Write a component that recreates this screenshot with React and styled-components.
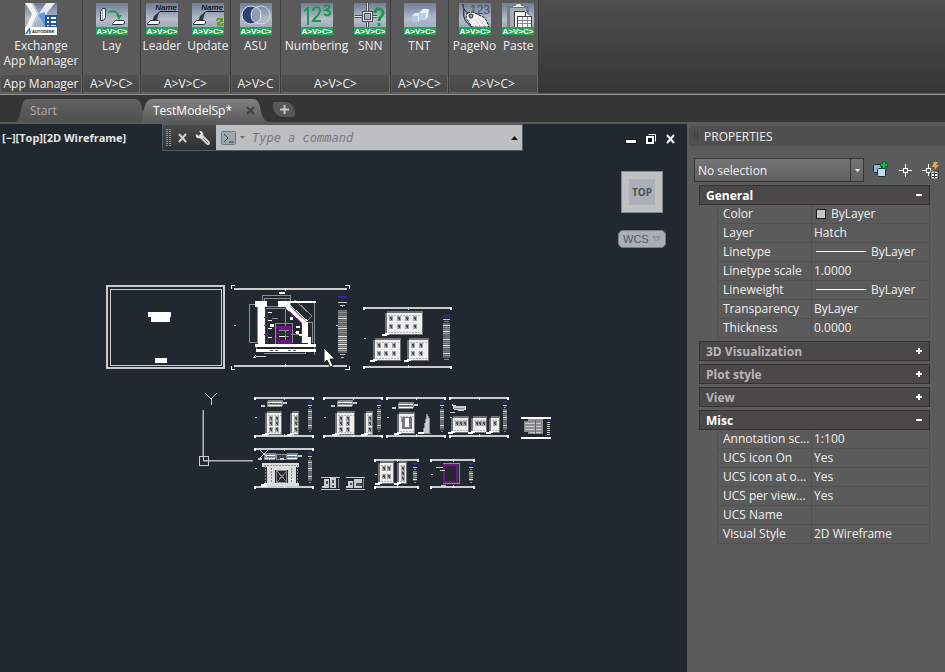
import React from "react";
import styled, { createGlobalStyle } from "styled-components";

const Global = createGlobalStyle`
  * { box-sizing: border-box; }
  body { margin: 0; background: #5b5b5b; color: #f0f0f0; font: 12px/15px "Open Sans", "Noto Sans", sans-serif; }
  button, input, select { font: inherit; color: inherit; margin: 0; }
  button { padding: 0; border: 0; background: none; cursor: default; }
  svg { display: block; }
`;

const Page = styled.div`
  min-height: 100vh;
  display: flex;
  flex-direction: column;
`;

/* ---------- ribbon ---------- */

const Ribbon = styled.header`
  display: flex;
  height: 93px;
  overflow: hidden;
  background: linear-gradient(#4e4e4e, #363636);
`;

const Panel = styled.section`
  display: flex;
  flex-direction: column;
  flex: none;
  width: ${(p) => p.$width}px;
  background: #5a5a5a;
  border-right: 1px solid #3c3c3c;
`;

const PanelTools = styled.div`
  flex: 1;
  display: flex;
  justify-content: center;
  align-items: flex-start;
  gap: 6px;
  padding-top: 3px;
`;

const Tool = styled.button`
  display: flex;
  flex-direction: column;
  align-items: center;
  gap: 3px;
  min-width: 32px;
`;

const PanelTitle = styled.div`
  height: 18px;
  margin-left: 1px;
  text-align: center;
  line-height: 18px;
  white-space: nowrap;
  background: linear-gradient(#505050, #484848);
  border-right: 1px solid #686868;
  border-bottom: 1px solid #686868;
`;

function IconBase({ children, band = "A>V>C>" }) {
  return (
    <svg width="32" height="32" viewBox="0 0 32 32" aria-hidden="true">
      <defs>
        <linearGradient id="tile" x1="0" y1="0" x2="0" y2="1">
          <stop offset="0" stopColor="#6e7c96" />
          <stop offset="0.5" stopColor="#b6bdc9" />
          <stop offset="1" stopColor="#8995a8" />
        </linearGradient>
      </defs>
      <rect width="32" height="32" fill="url(#tile)" />
      {children}
      {band && (
        <>
          <rect y="24" width="32" height="8" fill="#1ea654" />
          <text x="16" y="31" textAnchor="middle" fontSize="8" fontWeight="700" fontFamily="Liberation Sans, sans-serif" fill="#fff">{band}</text>
        </>
      )}
    </svg>
  );
}

const ExchangeIcon = () => (
  <IconBase band="">
    <path d="M0 0h8l6 11-6 13H1l6-13z" fill="#f4f6fa" />
    <path d="M8 0l6 11-6 13-2 0 6-13-6-11z" fill="#c3c9d4" />
    <path d="M21 0h9l-9 11 3 6-3 7-7-13z" fill="#e6ebf3" />
    <path d="M13 11l7-2v15z" fill="#5b9ade" />
    <rect x="20" y="12" width="12" height="12" fill="#2b5590" />
    <path d="M22 14h2v2h-2zM26 14h5v2h-5zM22 18h2v2h-2zM26 18h5v2h-5zM22 22h2v1h-2zM26 22h5v1h-5z" fill="#fff" />
    <rect y="24" width="32" height="8" fill="#fff" />
    <path d="M0 31l4-6h1l1 6H4v-3l-2 3z" fill="#1684c2" />
    <path d="M4 28l2 3H4z" fill="#3cae3c" />
    <text x="7" y="30" fontSize="4" fontWeight="700" fontFamily="Liberation Sans, sans-serif" fill="#111">AUTODESK</text>
  </IconBase>
);

const Slab = ({ x, y }) => (
  <path transform={`translate(${x} ${y})`} d="M0.500 3.500l3-3h8l1 1v2l-2 1h-10z" fill="#fff" stroke="#2a2d33" />
);

const LayIcon = () => (
  <IconBase>
    <path d="M4.500 8.500l2-3h3v9l-2 3h-3z" fill="#f4f6fa" stroke="#30343c" />
    <path d="M6.500 7v10" stroke="#8f9db5" />
    <path d="M12 9c6-2 10 0 11 5" fill="none" stroke="#19a34e" strokeWidth="2" />
    <path d="M20 12h6l-3 5z" fill="#19a34e" />
    <Slab x={16} y={17} />
  </IconBase>
);

const LeaderIcon = ({ update }) => (
  <IconBase>
    <text x="31" y="7" textAnchor="end" fontSize="8" fontStyle="italic" fontWeight="700" fontFamily="Liberation Sans, sans-serif" fill="#15181d">Name</text>
    <path d="M32 8.500H14L9 14" fill="none" stroke="#15181d" />
    <path d="M13 9l-5 4-2 6 5-2 1-4z" fill="#33373e" />
    <Slab x={1} y={17} />
    {update && (
      <>
        <path d="M25 18c0-3 3-3 5-1M31 20c0 3-3 3-5 1" fill="none" stroke="#5c9a20" strokeWidth="2" />
        <path d="M31 14v5h-4zM25 24v-5h4z" fill="#5c9a20" />
      </>
    )}
  </IconBase>
);

const AsuIcon = () => (
  <IconBase>
    <circle cx="21" cy="12" r="9" fill="none" stroke="#d5dbe5" strokeWidth="1" />
    <circle cx="11" cy="12" r="9" fill="#2c4272" stroke="#dfe4ec" />
    <path d="M16 4a9 9 0 0 1 0 16a9 9 0 0 1 0-16z" fill="#8f9cb4" stroke="#dfe4ec" />
  </IconBase>
);

const NumberingIcon = () => (
  <IconBase>
    <path d="M3 8l4-3v17M12 8c0-5 7-5 7-1 0 5-5 7-7 11h8M23 4c2-3 6-2 5 1l-3 2c4 0 5 4 3 5-2 1-4 0-5-1" fill="none" stroke="#169a4a" strokeWidth="2" />
  </IconBase>
);

const SnnIcon = () => (
  <IconBase>
    <path d="M13.500 0v10M13.500 17v7M1 13.500h9M18 13.500h5" stroke="#4a4e56" strokeWidth="3" />
    <path d="M13.500 0v10M13.500 17v7M1 13.500h9M18 13.500h5" stroke="#e5e7ea" />
    <rect x="9.500" y="9.500" width="8" height="8" fill="#a8afbb" stroke="#4a4e56" strokeWidth="3" />
    <rect x="9.500" y="9.500" width="8" height="8" fill="none" stroke="#e5e7ea" />
    <path d="M21 10c0-6 8-5 8 0 0 4-4 3-4 8M25 20v3" fill="none" stroke="#169a4a" strokeWidth="3" />
  </IconBase>
);

const TntIcon = () => (
  <IconBase>
    <path d="M0 20C14 20 24 13 32 8v16H0z" fill="#a9b5c8" opacity="0.6" />
    <path d="M8 13l3-3h5v7l-2 2H8z" fill="#dcebfa" />
    <path d="M8 13h6v6H8z" fill="#a9caec" />
    <path d="M15 10l4-4h6l-1 8-3 3h-6z" fill="#e6f1fc" />
    <path d="M15 10h7l-1 7h-6z" fill="#b3d1f0" />
  </IconBase>
);

const PageNoIcon = () => (
  <IconBase>
    <text x="31" y="11" textAnchor="end" fontSize="12" fontFamily="Liberation Sans, sans-serif" fill="#4a505b">123</text>
    <path d="M4 1c0 5 2 8 7 10M5 6c-1 9 0 12 8 18" fill="none" stroke="#15181d" />
    <path d="M8 10l6-1 12 6 4 8-1 1H13l-6-9z" fill="#f4f4f2" stroke="#15181d" strokeDasharray="3 1" />
    <circle cx="12" cy="13" r="2" fill="#9da5b3" stroke="#222" />
    <path d="M16 16l6 8M19 15l7 8" stroke="#c8c8c6" />
  </IconBase>
);

const PasteIcon = () => (
  <IconBase>
    <rect x="5" y="3" width="22" height="21" rx="1" fill="#777c85" />
    <rect x="8" y="5" width="16" height="19" fill="#a6abb4" />
    <path d="M10.500 4.500v-2h3l1-2h4l1 2h3v2z" fill="#f1f1f1" stroke="#6b6f76" />
    <path d="M12.500 8.500h10l5 5v11h-15z" fill="#f5f5f5" stroke="#34373c" />
    <path d="M23.500 9v5h5" fill="#fff" stroke="#34373c" />
    <rect x="15.500" y="13.500" width="14" height="11" fill="#fff" stroke="#3a3d42" />
    <path d="M16 17.500h13M16 20.500h13M20.500 14v10M25.500 14v10" stroke="#85888e" />
  </IconBase>
);

const PANELS = [
  { title: "App Manager", width: 83, tools: [["Exchange\nApp Manager", <ExchangeIcon />]] },
  { title: "A>V>C>", width: 58, tools: [["Lay", <LayIcon />]] },
  { title: "A>V>C>", width: 90, tools: [["Leader", <LeaderIcon />], ["Update", <LeaderIcon update />]] },
  { title: "A>V>C", width: 50, tools: [["ASU", <AsuIcon />]] },
  { title: "A>V>C>", width: 110, tools: [["Numbering", <NumberingIcon />], ["SNN", <SnnIcon />]] },
  { title: "A>V>C>", width: 58, tools: [["TNT", <TntIcon />]] },
  { title: "A>V>C>", width: 90, tools: [["PageNo", <PageNoIcon />], ["Paste", <PasteIcon />]] },
];

const ToolLabel = styled.span`
  white-space: pre;
`;

/* ---------- file tabs ---------- */

const TabBar = styled.nav`
  display: flex;
  align-items: flex-end;
  height: 28px;
  padding-left: 15px;
  background: #353535;
  border-top: 1px solid #909090;
  margin-top: 1px;
`;

const FileTab = styled.button`
  display: flex;
  align-items: center;
  justify-content: space-between;
  width: ${(p) => p.$width}px;
  height: 24px;
  padding: 0 14px 0 ${(p) => p.$pad}px;
  color: ${(p) => (p.$active ? "#ffffff" : "#b5adb3")};
  background: ${(p) => (p.$active ? "linear-gradient(#838383, #5b5b5b)" : "linear-gradient(#626262, #505050)")};
  clip-path: ${(p) => p.$shape};
`;

const NewTab = styled.button`
  display: grid;
  place-items: center;
  width: 22px;
  height: 15px;
  margin: 0 0 5px 4px;
  background: #585858;
  border-radius: 2px 10px 2px 10px;
`;

/* ---------- work area ---------- */

const Work = styled.div`
  flex: 1;
  display: flex;
  background: #5b5b5b;
`;

const Viewport = styled.main`
  position: relative;
  flex: 1;
  margin-top: 2px;
  overflow: hidden;
  background: #212830;
`;

const Drawing = styled.svg`
  position: absolute;
  left: 0;
  top: 0;
`;

const ViewportLabel = styled.div`
  position: absolute;
  left: 2px;
  top: 6px;
  font-weight: 700;
  font-size: 11px;
  color: #e6e6e6;
`;

const CommandBar = styled.form`
  position: absolute;
  left: 162px;
  top: 0;
  width: 361px;
  height: 27px;
  display: flex;
  border: 1px solid #5a5d60;
  background: #bdbec0;
`;

const CommandTools = styled.div`
  display: flex;
  align-items: center;
  width: 53px;
  gap: 7px;
  padding-left: 3px;
  background: linear-gradient(#4a4a4a, #303030);
`;

const CommandInput = styled.input`
  flex: 1;
  min-width: 0;
  padding: 0;
  border: 0;
  outline: 0;
  background: none;
  font: italic 12px/16px "DejaVu Sans Mono", monospace;
  &::placeholder { color: #77797c; opacity: 1; }
`;

const CommandButton = styled.button`
  display: flex;
  align-items: center;
  gap: 4px;
  padding: 0 4px 0 5px;
  & + input { padding-left: 3px; }
`;

const WindowButtons = styled.div`
  position: absolute;
  right: 10px;
  top: 9px;
  display: flex;
  align-items: center;
  gap: 8px;
`;

const ViewCube = styled.button`
  position: absolute;
  right: 24px;
  top: 47px;
  width: 42px;
  height: 42px;
  display: grid;
  place-items: center;
  background: #bfc0c2;
  border: 1px solid #85878a;
`;

const CubeFace = styled.span`
  width: 26px;
  height: 26px;
  text-align: center;
  background: #abafb7;
  color: #4c5158;
  font: 700 10px/26px "Open Sans", sans-serif;
`;

const WcsButton = styled.button`
  position: absolute;
  right: 21px;
  top: 106px;
  width: 48px;
  height: 18px;
  display: flex;
  align-items: center;
  justify-content: space-between;
  padding: 0 4px;
  border-radius: 5px;
  border: 1px solid #767c86;
  background: #a9aeb8;
  color: #555a63;
  font: 11px/16px "Liberation Sans", sans-serif;
`;

/* ---------- properties palette ---------- */

const Palette = styled.aside`
  width: 258px;
  padding-left: 2px;
`;

const PaletteTitle = styled.h2`
  display: flex;
  align-items: center;
  gap: 6px;
  height: 20px;
  margin: 4px 0 0;
  padding-left: 5px;
  font-size: 12px;
  font-weight: 400;
  background: #4f4f4f;
  border-radius: 4px 0 0 0;
`;

const SelectionRow = styled.div`
  display: flex;
  align-items: center;
  gap: 7px;
  margin: 12px 6px 3px 5px;
`;

const SelectBox = styled.div`
  position: relative;
  flex: 1;
  height: 24px;
  border: 1px solid #363636;
  background: linear-gradient(#737575, #606161);
`;

const Select = styled.select`
  appearance: none;
  width: 100%;
  height: 22px;
  padding: 0 16px 0 3px;
  border: 0;
  background: none;
`;

const SelectArrow = styled.span`
  position: absolute;
  right: 0;
  top: 0;
  bottom: 0;
  width: 13px;
  display: grid;
  place-items: center;
  border-left: 1px solid #363636;
  pointer-events: none;
`;

const IconButton = styled.button`
  width: 18px;
  height: 18px;
`;

const Section = styled.section`
  margin: 0 15px 3px 10px;
`;

const SectionHead = styled.button`
  display: flex;
  align-items: center;
  justify-content: space-between;
  width: 100%;
  height: 20px;
  padding: 0 6px;
  border: 1px solid #343233;
  background: #4b484a;
  color: ${(p) => (p.$open ? "#ffffff" : "#b9b5b8")};
  font-weight: 700;
`;

const PropTable = styled.table`
  width: calc(100% - 18px);
  margin-left: 18px;
  table-layout: fixed;
  border-collapse: separate;
  border-spacing: 0;
`;

const PropName = styled.th`
  width: 95px;
  height: 19px;
  padding: 0 0 0 5px;
  border: 1px solid #515151;
  border-top: 0;
  font-weight: 400;
  text-align: left;
  line-height: 18px;
  overflow: hidden;
  text-overflow: ellipsis;
  white-space: nowrap;
`;

const PropValue = styled.td`
  height: 19px;
  padding: 0 2px;
  border: 1px solid #515151;
  border-width: 0 1px 1px 0;
  line-height: 17px;
  vertical-align: top;
`;

const Sample = styled.span`
  display: flex;
  align-items: center;
  gap: 5px;
  padding-left: 2px;
`;

const Swatch = styled.i`
  width: 10px;
  height: 10px;
  background: #c4c4c4;
  border: 1px solid #1e1e1e;
`;

const LineSample = styled.i`
  width: 50px;
  height: 1px;
  background: #fff;
`;

const SECTIONS = [
  {
    title: "General",
    rows: [
      ["Color", <Sample><Swatch />ByLayer</Sample>],
      ["Layer", "Hatch"],
      ["Linetype", <Sample><LineSample />ByLayer</Sample>],
      ["Linetype scale", "1.0000"],
      ["Lineweight", <Sample><LineSample />ByLayer</Sample>],
      ["Transparency", "ByLayer"],
      ["Thickness", "0.0000"],
    ],
  },
  { title: "3D Visualization" },
  { title: "Plot style" },
  { title: "View" },
  {
    title: "Misc",
    rows: [
      ["Annotation sc...", "1:100"],
      ["UCS icon On", "Yes"],
      ["UCS icon at o...", "Yes"],
      ["UCS per view...", "Yes"],
      ["UCS Name", ""],
      ["Visual Style", "2D Wireframe"],
    ],
  },
];

/* ---------- model space drawing ---------- */

const W = "#ffffff";
const G = "#8b8e91";
const L = "#c9cbcd";
const P = "#6d1580";
const BLUE = "#30289c";
const STRIPES = ["#77797c", "#a9abad", "#8e9092", "#d9dadb", "#6d7073", "#f2f2f2", "#8e9092"];

function TitleStrip({ x, y, w, h }) {
  return (
    <g>
      <rect x={x} y={y} width={w} height="2" fill={BLUE} />
      <rect x={x} y={y + 4} width={w} height="1" fill={L} />
      <rect x={x + 1} y={y + 6} width={w - 2} height="1" fill={G} />
      <rect x={x} y={y + 8} width={w} height={h - 10} fill="#5d6164" />
      {Array.from({ length: Math.floor((h - 10) / 2) }, (_, i) => (
        <rect key={i} x={x} y={y + 8 + i * 2} width={w} height="1" fill={STRIPES[(i * 3) % 7]} />
      ))}
      <rect x={x + 1} y={y + h - 1} width={w - 2} height="1" fill={G} />
    </g>
  );
}

function Sheet({ x, y, w, h, bar = 4 }) {
  const mid = x + Math.round(w / 2);
  return (
    <g>
      <path d={`M${x + 2} ${y + 1}H${x + w - 2}M${x + 2} ${y + h - 1}H${x + w - 2}`} stroke={L} strokeWidth="2" />
      <path d={`M${x} ${y}h2v3h-2zM${x + w - 2} ${y}h2v3h-2zM${x} ${y + h - 2}h2v3h-2zM${x + w - 2} ${y + h - 2}h2v3h-2z`} fill={W} />
      <path d={`M${mid} ${y}h1v3h-1zM${mid} ${y + h - 3}h1v3h-1zM${x + 1} ${y + Math.round(h / 2)}h2v1h-2z`} fill={W} />
      <TitleStrip x={x + w - 2 - bar} y={y + (bar > 5 ? 8 : 4)} w={bar} h={h - (bar > 5 ? 16 : 9)} />
    </g>
  );
}

function Block({ x, y, w, h, windows = [2, 2] }) {
  const [c, r] = windows;
  const cells = [];
  for (let i = 0; i < c; i++)
    for (let j = 0; j < r; j++)
      cells.push([Math.round(x + 2 + ((w - 3) / c) * i), Math.round(y + 3 + ((h - 5) / r) * j)]);
  return (
    <g>
      <path d={`M${x - 2} ${y}h2v-2h${w + 1}v${h + 3}h-${w + 3}z`} fill="#6f7275" />
      <rect x={x} y={y} width={w} height={h} fill="#eeeff0" />
      <path d={`M${x + 1} ${y + 2}h${w - 1}M${x + 1} ${y + h - 2}h${w - 1}`} stroke="#b4b6b8" strokeDasharray="2 1" />
      {cells.map(([a, b], i) => (
        <g key={i}>
          <rect x={a} y={b} width="4" height="5" fill="#a3a6a8" />
          <rect x={a + 1} y={b + 1} width="2" height="2" fill="#4a4f54" />
          <rect x={a + 2} y={b + 3} width="1" height="1" fill="#30363d" />
        </g>
      ))}
      <path d={`M${x - 5} ${y + h + 1}h4v-1h3`} fill="none" stroke={W} strokeWidth="2" />
    </g>
  );
}

function Roof({ x, y, w }) {
  return (
    <g>
      <rect x={x} y={y} width={w} height="7" rx="2" fill="#85888b" />
      <path d={`M${x + 1} ${y + 2}h${w - 2}M${x + 1} ${y + 5}h${w - 2}`} stroke={W} strokeWidth="1" />
      <path d={`M${x + 3} ${y + 3}h${w - 6}`} stroke="#4c5157" strokeDasharray="2 1" />
      <path d={`M${x - 6} ${y + 6}h4M${x + w} ${y + 3}h4`} stroke={L} strokeWidth="2" />
    </g>
  );
}

function FloorPlan() {
  return (
    <g>
      <path d="M249.500 304.500h8v38h-8zM262.500 295.500h28v13h-28zM264.500 298.500h26v8h-26zM290 304l5-4 17 16-5 5M308 322.500h4.500v20M314.500 301v54M256.500 346v6M263.500 353.500h42v-5M285.500 300v40" fill="none" stroke={G} />
      <path d="M258 301h7v43h-7zM255 301h12v6h-12zM278 301h12v6h-12zM290 301h26v2h-26zM302 322h6v21h-6zM308 337h3v8h-3zM255 344h61v3h-61zM256 349h60v3h-60z" fill={W} />
      <path d="M287 306l19 17" stroke={W} strokeWidth="6" />
      <path d="M290 306l17 16M286 309l16 14" stroke={G} />
      <path d="M265.500 307v36M267.500 310v33M264 317h4M264 325h4M264 334h4M285 308l16 15v20M276.500 342v-16h16v17M279.500 328h11v13h-11zM277 333h15" fill="none" stroke={P} />
      <path d="M275.500 344v-21h17v20M279 330h10M279 336h10M272 318h6M291 334h10" fill="none" stroke={G} />
      <path d="M278 326h13v4h-13zM278 340h13v4h-13z" fill={P} />
      <path d="M268 312h4v1h-4zM268 320h4v1h-4zM268 328h4v1h-4zM268 337h4v1h-4zM296 326h4v2h-4zM299 334h3v2h-3zM270 324h4v3h-4zM290 317h3v3h-3zM279 336h6v1h-6zM279 292h6v2h-6z" fill={W} />
      <circle cx="297.500" cy="332.500" r="2" fill={W} />
      <path d="M270 350h8M288 350h8" stroke="#5c6268" strokeDasharray="3 2" />
      <path d="M266 356l-10 1h-2l2-2" fill="none" stroke={L} />
    </g>
  );
}

function ModelSpace() {
  return (
    <Drawing width="687" height="548" viewBox="0 124 687 548" aria-label="Model space" shapeRendering="crispEdges">
      <path d="M107 286h117v82H107z" fill="none" stroke={L} strokeWidth="2" />
      <path d="M110.500 289.500h111v76h-111z" fill="none" stroke={L} />
      <path d="M148 312h23v5h-23zM151 317h19v5h-19zM155 358h12v5h-12z" fill={W} />

      <path d="M234 289h113M234 366h113" stroke={L} strokeWidth="2" />
      <path d="M231 285h4v1h-3v3h-1zM345 285h5v4h-1v-3h-4zM231 366h1v3h3v1h-4zM349 366h1v4h-5v-1h4zM285 288h1v3h-1zM285 364h1v3h-1zM234 325h2v1h-2zM336 325h3v1h-3z" fill={W} />
      <rect x="338" y="296" width="9" height="2" fill={BLUE} />
      <path d="M338 302.500h9M340 305.500h5M342 306.500h1M340 354.500h5M341 357.500h3" stroke={L} />
      <rect x="338" y="310" width="9" height="43" fill="#606467" />
      {Array.from({ length: 21 }, (_, i) => (
        <rect key={i} x="338" y={310 + i * 2} width="9" height="1" fill={i > 12 ? (i % 2 ? "#e8e8e8" : "#a9abad") : STRIPES[(i * 2) % 5]} />
      ))}
      <FloorPlan />

      <Sheet x={363} y={307} w={89} h={61} bar={7} />
      <Block x={387} y={313} w={35} h={21} windows={[4, 2]} />
      <Block x={375} y={340} w={25} h={20} windows={[3, 2]} />
      <Block x={409} y={340} w={19} h={20} windows={[2, 2]} />

      <Sheet x={254} y={397} w={60} h={40} />
      <Roof x={267} y={400} w={16} />
      <Block x={267} y={413} w={14} h={21} windows={[2, 3]} />
      <Block x={292} y={413} w={6} h={21} windows={[1, 3]} />
      <Sheet x={323} y={397} w={60} h={40} />
      <Roof x={337} y={400} w={16} />
      <Block x={337} y={413} w={17} h={21} windows={[2, 3]} />
      <Block x={366} y={413} w={6} h={21} windows={[1, 3]} />
      <Sheet x={386} y={397} w={60} h={40} />
      <Roof x={398} y={402} w={16} />
      <Block x={399} y={414} w={15} h={19} windows={[1, 1]} />
      <path d="M402 417h10v12h-10z" fill="#73777a" />
      <path d="M405 418h4v9h-4z" fill={W} />
      <path d="M423 433l4-19 2 4 1 15z" fill={L} stroke={G} />
      <path d="M418 433h6" stroke={W} strokeWidth="2" />
      <Sheet x={449} y={397} w={60} h={40} />
      <path d="M452 404l5 2h9v4l-5 1-7-1zM450 412h5v1h-5z" fill={L} />
      <path d="M454 408h10" stroke={G} />
      <Block x={453} y={418} w={15} h={14} windows={[3, 1]} />
      <Block x={473} y={418} w={13} h={14} windows={[3, 1]} />
      <Block x={491} y={418} w={8} h={14} windows={[1, 1]} />
      <path d="M521 418h30M521 438h30" stroke={W} strokeWidth="2" />
      <path d="M524 421h5v11h-5zM528 419h15v15h-15z" fill="#8a8d90" />
      <path d="M525 423.500h16M525 426.500h16M525 429.500h16M530 432.500h11" stroke={L} />
      <path d="M535.500 420v13" stroke="#63676a" />
      <path d="M547 420h4" stroke={BLUE} strokeWidth="2" />
      <path d="M547 422.500h3M547 424.500h3M547 426.500h3M547 428.500h3M547 430.500h3M547 432.500h3M547 434.500h3" stroke={L} />

      <Sheet x={254} y={448} w={60} h={40} />
      <Roof x={264} y={453} w={12} />
      <path d="M276.500 454.500h10v5h-10z" fill="#3b4148" stroke={G} />
      <Roof x={286} y={453} w={12} />
      <path d="M270 456h3v1h-3zM290 456h3v1h-3z" fill="#4a7fc0" />
      <path d="M262 463h37v4h-37zM267 467h8v18h-8zM288 467h8v18h-8zM264 483h35v3h-35zM275 464h13v6h-13z" fill="#dcdddf" />
      <path d="M265.500 466v18M271.500 468v15M291.500 468v15M297.500 466v18M264 465.500h34" stroke={G} strokeDasharray="2 1" />
      <path d="M276.500 470.500h10v12h-10zM277 471l10 11M287 471l-10 11" fill="none" stroke={G} />
      <path d="M261 484h6v3h-6z" fill={W} />

      <path d="M321 477.500h19M321 489.500h19M346 477.500h19M346 489.500h19" stroke={L} />
      <path d="M324 479h5v9h-5zM330 478h6v10h-6zM348 481h5v7h-5zM354 479h8v9h-8zM322 486h4v2h-4zM346 486h4v2h-4z" fill={L} />
      <path d="M326 481h2v3h-2zM332 480h2v3h-2zM332 485h2v2h-2zM356 483h6v3h-6zM350 483h2v2h-2z" fill="#4b5158" />
      <path d="M338.500 479v9M363.500 479v9" stroke={G} />

      <Sheet x={374} y={459} w={45} h={29} />
      <Block x={380} y={463} w={13} h={20} windows={[2, 2]} />
      <Block x={399} y={463} w={7} h={20} windows={[1, 3]} />
      <Sheet x={430} y={459} w={45} h={29} />
      <path d="M443.500 463.500h16v20h-16zM446 482.500h12" fill="none" stroke={G} />
      <path d="M444 465h13v17h-13z" fill="none" stroke={P} strokeWidth="2" />
      <path d="M436 467.500h7M440 470.500h5M441 485.500h5" stroke={L} />

      <g fill="none" shapeRendering="auto">
        <path d="M203.500 410v47M204 460.500h49" stroke="#b3b5b8" strokeWidth="1" />
        <path d="M202.500 410v47M208 461.500h45" stroke="#6d7175" />
        <rect x="199.500" y="456.500" width="9" height="9" stroke={L} />
        <path d="M203.500 457v4H208M205 393l6 6 6-6M211.500 398v7M258 448l12 12M270 448l-12 12" stroke={L} />
      </g>

      <path d="M324 348v15l3-3 3 7 3-1-3-7h5z" fill="#fff" stroke="#1a1f25" shapeRendering="auto" />
    </Drawing>
  );
}

const Crosshair = () => (
  <svg width="18" height="18" viewBox="0 0 18 18" aria-hidden="true">
    <path d="M9.500 3v4M9.500 12v4M3 9.500h4M12 9.500h4" stroke="#fff" />
    <rect x="7.500" y="7.500" width="4" height="4" fill="none" stroke="#fff" />
  </svg>
);

const QuickSelectIcon = () => (
  <svg width="18" height="18" viewBox="0 0 18 18" aria-hidden="true">
    <path d="M7.500 3v4M7.500 12v3M1 9.500h4M10 9.500h2" stroke="#fff" />
    <rect x="5.500" y="7.500" width="4" height="4" fill="none" stroke="#fff" />
    <path d="M13 1h4l-2 3h3l-6 6 2-4h-3z" fill="#f2a45c" />
    <rect x="10" y="10" width="7" height="8" fill="#fff" stroke="#2a2a2a" />
    <path d="M11 12.500h5M11 15.500h5M13.500 11v6" stroke="#333" />
  </svg>
);

export default function App() {
  return (
    <Page>
      <Global />
      <Ribbon>
        {PANELS.map((p, i) => (
          <Panel key={i} $width={p.width}>
            <PanelTools>
              {p.tools.map(([label, icon]) => (
                <Tool key={label} type="button">
                  {icon}
                  <ToolLabel>{label}</ToolLabel>
                </Tool>
              ))}
            </PanelTools>
            <PanelTitle>{p.title}</PanelTitle>
          </Panel>
        ))}
      </Ribbon>

      <TabBar>
        <FileTab type="button" $width={128} $pad={15} $shape='path("M0 24C8 21 4 1 13 1H120C128 2 126 10 128 14V24Z")'>Start</FileTab>
        <FileTab type="button" $active $width={126} $pad={10} $shape='path("M0 14C2 8 3 1 10 1H110C120 1 115 20 125 24H0Z")'>
          TestModelSp*
          <svg width="9" height="9" viewBox="0 0 9 9" aria-hidden="true"><path d="M1 1l7 7M8 1L1 8" stroke="#424242" strokeWidth="2" /></svg>
        </FileTab>
        <NewTab type="button" aria-label="New tab">
          <svg width="9" height="9" viewBox="0 0 9 9" aria-hidden="true"><path d="M4.500 0v9M0 4.500h9" stroke="#c8c8c8" strokeWidth="2" /></svg>
        </NewTab>
      </TabBar>

      <Work>
        <Viewport>
          <ModelSpace />
          <ViewportLabel>[−][Top][2D Wireframe]</ViewportLabel>

          <CommandBar onSubmit={(e) => e.preventDefault()}>
            <CommandTools>
              <svg width="5" height="17" viewBox="0 0 5 17" aria-hidden="true">
                <path d="M1 0v17M4 0v17" stroke="#949494" strokeWidth="2" strokeDasharray="1 1" />
              </svg>
              <button type="button" aria-label="Close">
                <svg width="9" height="10" viewBox="0 0 9 10"><path d="M1 1l7 8M8 1L1 9" stroke="#cfcfcf" strokeWidth="2" /></svg>
              </button>
              <button type="button" aria-label="Customize">
                <svg width="18" height="16" viewBox="0 0 18 16">
                  <path d="M7 6l7 7" stroke="#d3d5d7" strokeWidth="4" strokeLinecap="round" />
                  <path d="M7 1L5 1l2 3-2 2-3-2C1 8 4 9 7 8l2-2C10 4 9 2 7 1z" fill="#dcdee0" />
                  <path d="M9 8l5 5" stroke="#5a5d60" />
                </svg>
              </button>
            </CommandTools>
            <CommandButton type="button" aria-label="Recent commands">
              <svg width="15" height="14" viewBox="0 0 15 14">
                <rect x="0.500" y="0.500" width="14" height="13" rx="1" fill="#9da5af" stroke="#6f767e" />
                <path d="M3 3l4 4-4 4M8 11h5" fill="none" stroke="#363d46" />
              </svg>
              <svg width="5" height="4" viewBox="0 0 5 4"><path d="M0 0h5L2.500 3z" fill="#6b6e71" /></svg>
            </CommandButton>
            <CommandInput aria-label="Command" placeholder="Type a command" />
            <CommandButton type="button" aria-label="Show history">
              <svg width="7" height="4" viewBox="0 0 7 4"><path d="M0 4h7L3.500 0z" fill="#15181d" /></svg>
            </CommandButton>
          </CommandBar>

          <WindowButtons>
            <button type="button" aria-label="Minimize">
              <svg width="12" height="12" viewBox="0 0 12 12"><path d="M0 6h12v5H0z" fill="#10151b" /><path d="M1 7h10v3H1z" fill="#fff" /></svg>
            </button>
            <button type="button" aria-label="Restore">
              <svg width="12" height="12" viewBox="0 0 12 12"><path d="M3.500 1.500h7v7" fill="none" stroke="#fff" /><path d="M2 4h6v6H2z" fill="#10151b" stroke="#fff" strokeWidth="2" /></svg>
            </button>
            <button type="button" aria-label="Close drawing">
              <svg width="12" height="12" viewBox="0 0 12 12"><path d="M2 2l7 8M9 2l-7 8" stroke="#fff" strokeWidth="2" /></svg>
            </button>
          </WindowButtons>

          <ViewCube type="button"><CubeFace>TOP</CubeFace></ViewCube>
          <WcsButton type="button">
            WCS
            <svg width="9" height="6" viewBox="0 0 9 6" aria-hidden="true"><path d="M1 1h7L4.500 5z" fill="none" stroke="#7f858f" /></svg>
          </WcsButton>
        </Viewport>

        <Palette>
          <PaletteTitle>
            <svg width="4" height="10" viewBox="0 0 4 10" aria-hidden="true">
              <path d="M0.500 0v10M3.500 0v10" stroke="#2e2e2e" strokeDasharray="1 1" />
            </svg>
            PROPERTIES
          </PaletteTitle>
          <SelectionRow>
            <SelectBox>
              <Select aria-label="Selection"><option>No selection</option></Select>
              <SelectArrow>
                <svg width="5" height="3" viewBox="0 0 5 3"><path d="M0 0h5L2.500 3z" fill="#eee" /></svg>
              </SelectArrow>
            </SelectBox>
            <IconButton type="button" aria-label="Toggle PICKADD">
              <svg width="18" height="18" viewBox="0 0 18 18">
                <rect x="2.500" y="3.500" width="8" height="8" rx="1" fill="#8fb9dc" stroke="#1b2b3c" />
                <rect x="6.500" y="7.500" width="8" height="8" rx="1" fill="#bcdcf3" stroke="#1b2b3c" />
                <path d="M11.500 0.500h3v2h2v3h-2v2h-3v-2h-2v-3h2z" fill="#19b351" stroke="#145c2c" />
              </svg>
            </IconButton>
            <IconButton type="button" aria-label="Select objects"><Crosshair /></IconButton>
            <IconButton type="button" aria-label="Quick select"><QuickSelectIcon /></IconButton>
          </SelectionRow>

          {SECTIONS.map((s) => (
            <Section key={s.title}>
              <SectionHead type="button" $open={!!s.rows} aria-expanded={!!s.rows}>
                {s.title}
                <svg width="8" height="8" viewBox="0 0 8 8" aria-hidden="true">
                  <path d={s.rows ? "M1 4h6" : "M1 4h6M4 1v6"} stroke="#fff" strokeWidth="2" />
                </svg>
              </SectionHead>
              {s.rows && (
                <PropTable>
                  <tbody>
                    {s.rows.map(([name, value]) => (
                      <tr key={name}>
                        <PropName scope="row">{name}</PropName>
                        <PropValue>{value}</PropValue>
                      </tr>
                    ))}
                  </tbody>
                </PropTable>
              )}
            </Section>
          ))}
        </Palette>
      </Work>
    </Page>
  );
}
